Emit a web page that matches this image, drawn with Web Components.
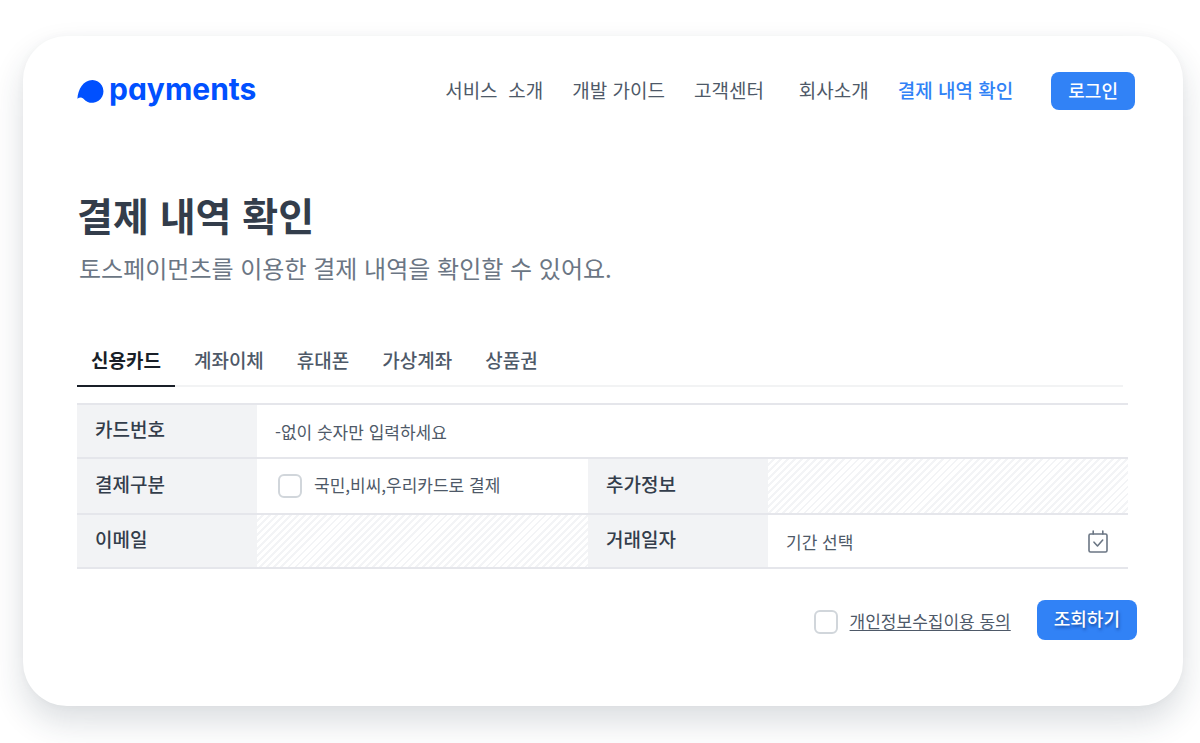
<!DOCTYPE html>
<html lang="ko">
<head>
<meta charset="utf-8">
<meta name="viewport" content="width=device-width, initial-scale=1">
<title>결제 내역 확인</title>
<style>
  body {
    --ink: #333d4b;
    --text: #4e5968;
    --muted: #6b7684;
    --blue: #3182f6;
    --line: #e5e6eb;
    --fill: #f2f3f5;
    margin: 0;
    padding: 36px 17px 37px 23px;
    background: #fff;
    color: var(--text);
    font-family: "Noto Sans CJK KR", sans-serif;
    font-size: 19px;
    line-height: 28px;
  }
</style>
</head>
<body>
<pay-card>
  <pay-header slot="header"></pay-header>
  <pay-heading>
    <span slot="title">결제 내역 확인</span>
    <span slot="lead">토스페이먼츠를 이용한 결제 내역을 확인할 수 있어요.</span>
  </pay-heading>
  <pay-tabs></pay-tabs>
  <pay-form></pay-form>
</pay-card>

<script>
  const define = (name, html) => {
    const template = document.createElement('template');
    template.innerHTML = html;
    customElements.define(name, class extends HTMLElement {
      constructor() {
        super();
        this.attachShadow({ mode: 'open' }).append(template.content.cloneNode(true));
      }
    });
  };

  define('pay-card', `
    <style>
      :host {
        display: block;
        padding: 36px 46px 66px 54px;
        border-radius: 44px;
        background: #fff;
        box-shadow: 0 16px 32px rgba(30, 50, 70, .16), 0 0 8px rgba(30, 50, 70, .03);
      }
    </style>
    <slot name="header"></slot>
    <main><slot></slot></main>
  `);

  define('pay-logo', `
    <style>
      :host { display: block; }
      a {
        display: flex;
        align-items: center;
        gap: 4px;
        color: #0050ff;
        font: 700 30px/34px Inter, sans-serif;
        font-feature-settings: "cv11";
        text-decoration: none;
      }
      span { padding-bottom: 4px; }
      svg { display: block; }
    </style>
    <a href="#home">
      <svg width="28" height="26" viewBox="0 0 28 26" fill="currentColor" aria-hidden="true">
        <path d="M0.4 20.8C1 11.500 6 2 15.500 2A11.400 11.400 0 1 1 6.200 20.600C4.300 18.800 2.200 19.500.4 20.800Z"/>
      </svg>
      <span>payments</span>
    </a>
  `);

  define('pay-button', `
    <style>
      :host { display: block; }
      button {
        display: block;
        height: 38px;
        padding: 0 17px 2px;
        border: 0;
        border-radius: 8px;
        background: var(--blue);
        color: #fff;
        font: 500 18px/36px "Noto Sans CJK KR", sans-serif;
        cursor: pointer;
      }
      :host([large]) button {
        height: 40px;
        padding-bottom: 4px;
        text-shadow: 1px 2px 3px rgba(0, 30, 90, .5);
      }
    </style>
    <button type="button"><slot></slot></button>
  `);

  define('pay-header', `
    <style>
      :host { display: block; margin-right: 2px; }
      header { display: flex; align-items: center; justify-content: space-between; }
      nav, ul { display: flex; align-items: center; }
      nav { gap: 38px; }
      ul { gap: 29px; margin: 0; padding: 0 0 2px; list-style: none; }
      li { white-space: nowrap; }
      .company { padding-left: 6px; }
      a { color: var(--text); text-decoration: none; }
      a[aria-current] { color: var(--blue); font-weight: 500; }
    </style>
    <header>
      <pay-logo></pay-logo>
      <nav>
        <ul>
          <li><a href="#service">서비스&nbsp; 소개</a></li>
          <li><a href="#guide">개발 가이드</a></li>
          <li><a href="#support">고객센터</a></li>
          <li class="company"><a href="#company">회사소개</a></li>
          <li><a href="#history" aria-current="page">결제 내역 확인</a></li>
        </ul>
        <pay-button>로그인</pay-button>
      </nav>
    </header>
  `);

  define('pay-heading', `
    <style>
      :host { display: block; padding-top: 74px; }
      h1 { margin: 0; color: var(--ink); font-size: 39px; line-height: 60px; font-weight: 700; }
      p { margin: 6px 0 0 2px; color: var(--muted); font-size: 24px; line-height: 36px; }
    </style>
    <h1><slot name="title"></slot></h1>
    <p><slot name="lead"></slot></p>
  `);

  define('pay-tabs', `
    <style>
      :host { display: block; margin: 53px 10px 0 0; }
      div { display: flex; gap: 5px; margin-right: 4px; box-shadow: inset 0 -2px #f2f3f4; }
      button {
        height: 48px;
        padding: 0 14px 4px;
        border: 0;
        border-bottom: 2px solid transparent;
        background: none;
        color: var(--text);
        font: 500 19px/28px "Noto Sans CJK KR", sans-serif;
      }
      button[aria-selected="true"] { border-color: #191f28; color: #191f28; font-weight: 700; }
    </style>
    <div role="tablist">
      <button role="tab" aria-selected="true">신용카드</button>
      <button role="tab" aria-selected="false">계좌이체</button>
      <button role="tab" aria-selected="false">휴대폰</button>
      <button role="tab" aria-selected="false">가상계좌</button>
      <button role="tab" aria-selected="false">상품권</button>
    </div>
  `);

  define('pay-form', `
    <style>
      :host { display: block; margin-top: 16px; }
      table {
        width: calc(100% - 9px);
        table-layout: fixed;
        border-spacing: 0;
        border-top: 2px solid var(--line);
      }
      .label { width: 180px; }
      .date { width: 360px; }
      tr { height: 54px; }
      tr.tall { height: 56px; }
      th, td { box-sizing: border-box; padding: 0 18px; border-bottom: 2px solid var(--line); }
      th { padding-bottom: 4px; background: var(--fill); color: var(--ink); font-weight: 500; text-align: left; }
      .off { background: repeating-linear-gradient(135deg, #fff 0 3px, #f3f4f6 3px 5px); }
      input[type="text"] {
        display: block;
        box-sizing: border-box;
        width: 100%;
        height: 36px;
        padding: 0;
        border: 0;
        outline: 0;
        background: none;
        color: var(--text);
        font: 400 17px/26px "Noto Sans CJK KR", sans-serif;
      }
      input::placeholder { color: var(--text); opacity: 1; }
      input[type="checkbox"] {
        appearance: none;
        flex: none;
        width: 24px;
        height: 24px;
        margin: 0;
        border: 2px solid #d1d6db;
        border-radius: 6px;
        background: #fff;
      }
      .check { display: flex; align-items: center; gap: 12px; font-size: 17px; line-height: 26px; }
      .check label { padding-bottom: 3px; }
      td .check { padding-left: 3px; }
      .period { display: flex; align-items: center; }
      .period svg { flex: none; color: var(--muted); }
      .actions { display: flex; align-items: center; justify-content: flex-end; gap: 26px; margin-top: 31px; }
      .actions .check { padding-top: 4px; }
      a { color: var(--text); text-decoration: underline; text-underline-offset: 2px; }
    </style>
    <form>
      <table>
        <colgroup><col class="label"><col><col class="label"><col class="date"></colgroup>
        <tbody>
          <tr>
            <th scope="row"><label for="number">카드번호</label></th>
            <td colspan="3"><input id="number" type="text" inputmode="numeric" placeholder="-없이 숫자만 입력하세요"></td>
          </tr>
          <tr class="tall">
            <th scope="row">결제구분</th>
            <td><div class="check"><input id="kind" type="checkbox"><label for="kind">국민,비씨,우리카드로 결제</label></div></td>
            <th scope="row">추가정보</th>
            <td class="off"></td>
          </tr>
          <tr>
            <th scope="row">이메일</th>
            <td class="off"></td>
            <th scope="row"><label for="period">거래일자</label></th>
            <td>
              <div class="period">
                <input id="period" type="text" placeholder="기간 선택">
                <svg width="24" height="26" viewBox="0 0 24 26" fill="none" stroke="currentColor" stroke-width="1.600" stroke-linecap="round" stroke-linejoin="round" aria-hidden="true">
                  <rect x="3" y="6" width="18" height="18" rx="1.500"/>
                  <path d="M7.200 3V6M16.800 3V6M8 14.200l3.500 3.800 5.200-6"/>
                </svg>
              </div>
            </td>
          </tr>
        </tbody>
      </table>
      <div class="actions">
        <div class="check"><input id="agree" type="checkbox" aria-labelledby="terms"><label for="agree"><a id="terms" href="#terms">개인정보수집이용 동의</a></label></div>
        <pay-button large>조회하기</pay-button>
      </div>
    </form>
  `);
</script>
</body>
</html>
